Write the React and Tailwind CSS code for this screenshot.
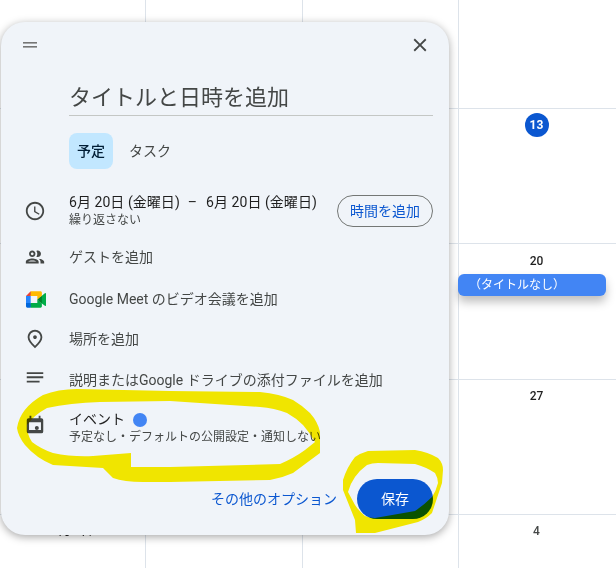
const font = { fontFamily: '"Roboto", "Noto Sans CJK JP", sans-serif' };

const cells = [
  '', '', '', '',
  '', '', '', '13',
  '', '', '', '20',
  '', '', '', '27',
  '7月 1日', '', '', '4',
];

const Icon = ({ d, size = 22, className = '' }) => (
  <svg viewBox="0 0 24 24" width={size} height={size} className={`fill-[#444746] shrink-0 ${className}`}>
    <path fillRule="evenodd" d={d} />
  </svg>
);

const MeetIcon = () => (
  <svg viewBox="0 0 87.5 72" width="20" height="17" className="shrink-0">
    <path fill="#00832d" d="M49.5 36l8.53 9.75 11.47 7.33 2-17.02-2-16.64-11.69 6.44z" />
    <path fill="#0066da" d="M0 51.5V66c0 3.315 2.685 6 6 6h14.5l3-10.96-3-9.54-9.95-3z" />
    <path fill="#e94235" d="M20.5 0L0 20.5l10.55 3 9.95-3 2.95-9.41z" />
    <path fill="#2684fc" d="M20.5 20.5H0v31h20.5z" />
    <path fill="#00ac47" d="M82.6 8.68L69.5 19.42v33.66l13.16 10.79c1.97 1.54 4.85.135 4.85-2.37V11c0-2.535-2.945-3.925-4.91-2.32zM49.5 36v15.5h-29V72h43c3.315 0 6-2.685 6-6V53.08z" />
    <path fill="#ffba00" d="M63.5 0h-43v20.5h29V36l20-16.57V6c0-3.315-2.685-6-6-6z" />
  </svg>
);

const Row = ({ className, icon, children }) => (
  <div className={`flex items-center pl-[23px] pr-4 ${className}`}>
    <div className="w-[45px] shrink-0 flex items-center">{icon}</div>
    {children}
  </div>
);

const paths = {
  close: 'M19 6.41 17.59 5 12 10.59 6.41 5 5 6.41 10.59 12 5 17.59 6.41 19 12 13.41 17.59 19 19 17.59 13.41 12z',
  clock: 'M11.99 2C6.47 2 2 6.48 2 12s4.47 10 9.99 10C17.52 22 22 17.52 22 12S17.52 2 11.99 2zM12 20c-4.42 0-8-3.58-8-8s3.58-8 8-8 8 3.58 8 8-3.58 8-8 8zm.5-13H11v6l5.25 3.15.75-1.23-4.5-2.67z',
  people: 'M9 13.75c-2.34 0-7 1.17-7 3.5V19h14v-1.75c0-2.33-4.66-3.5-7-3.5zM4.34 17c.84-.58 2.87-1.25 4.66-1.25s3.82.67 4.66 1.25H4.34zM9 12c1.93 0 3.5-1.57 3.5-3.5S10.93 5 9 5 5.5 6.57 5.5 8.5 7.07 12 9 12zm0-5c.83 0 1.5.67 1.5 1.5S9.83 10 9 10s-1.5-.67-1.5-1.5S8.17 7 9 7zm7.04 6.81c1.16.84 1.96 1.96 1.96 3.44V19h4v-1.75c0-2.02-3.5-3.17-5.96-3.44zM15 12c1.93 0 3.5-1.57 3.5-3.5S16.93 5 15 5c-.54 0-1.04.13-1.5.35.63.89 1 1.98 1 3.15s-.37 2.26-1 3.15c.46.22.96.35 1.5.35z',
  place: 'M12 12c-1.1 0-2-.9-2-2s.9-2 2-2 2 .9 2 2-.9 2-2 2zm6-1.8C18 6.57 15.35 4 12 4s-6 2.57-6 6.2c0 2.34 1.95 5.44 6 9.14 4.05-3.7 6-6.8 6-9.14zM12 2c4.2 0 8 3.22 8 8.2 0 3.32-2.67 7.25-8 11.8-5.33-4.55-8-8.48-8-11.8C4 5.22 7.8 2 12 2z',
  notes: 'M3 3.5h18v2H3zM3 8h18v2H3zM3 12.8h14v2H3z',
  event: 'M5 4.5h1V2h2v2.5h8V2h2v2.5h1a2 2 0 0 1 2 2V19a2 2 0 0 1-2 2H5a2 2 0 0 1-2-2V6.5a2 2 0 0 1 2-2zM5.5 9v8.5h13V9zM14 13a2.2 2.2 0 1 1 0 4.4 2.2 2.2 0 0 1 0-4.4z',
};

const App = () => {
  return (
    <div className="relative w-[616px] h-[568px] overflow-hidden bg-white" style={font}>
      {/* calendar behind the dialog */}
      <div className="grid grid-cols-[146px_157px_156px_157px] grid-rows-[109px_135px_136px_135px_53px] w-[616px] h-[568px]">
        {cells.map((c, i) => (
          <div
            key={i}
            className={`flex flex-col items-center border-[#dde3ea] ${i % 4 === 3 ? 'border-r-0 pr-[2px]' : 'border-r'} ${i < 16 ? 'border-b' : ''} ${i >= 15 ? 'pt-[7px]' : 'pt-2'}`}
          >
            {c === '13' ? (
              <div className="w-6 h-6 -mt-[4px] rounded-full bg-[#0b57d0] text-white text-xs font-bold flex items-center justify-center">13</div>
            ) : (
              <div className={`text-xs leading-[18px] font-medium ${c === '4' ? 'text-[#444746]' : 'text-[#1f1f1f]'}`}>{c}</div>
            )}
          </div>
        ))}
      </div>

      {/* the new event chip */}
      <div className="absolute left-[458px] top-[274px] w-[148px] h-[22px] rounded-md bg-[#4285f4] text-white text-xs leading-[22px] pl-[11px] shadow-[0_6px_10px_rgba(0,0,0,0.25)]">
        （タイトルなし）
      </div>

      {/* dialog */}
      <div className="absolute left-[1px] top-[22px] w-[448px] h-[513px] rounded-[24px] bg-[#f0f4f9] shadow-[0_2px_8px_rgba(0,0,0,0.35)] flex flex-col">
        <div className="flex items-center justify-between h-[46px] pl-[21px] pr-[18px] shrink-0">
          <svg viewBox="0 0 16 8" width="16" height="8" className="fill-[#757575]">
            <rect x="1" y="1" width="14" height="1.6" />
            <rect x="1" y="5" width="14" height="1.6" />
          </svg>
          <Icon d={paths.close} size={22} />
        </div>

        <div className="ml-[68px] mr-[16px] mt-[10px] h-[38px] border-b border-[#c4c7c5] text-[22px] leading-[40px] text-[#444746] shrink-0">
          タイトルと日時を追加
        </div>

        <div className="ml-[68px] mt-[17px] flex items-center gap-4 h-9 shrink-0 text-sm">
          <div className="w-11 h-9 rounded-lg bg-[#c2e7ff] text-[#001d35] font-medium flex items-center justify-center">予定</div>
          <div className="text-[#444746]">タスク</div>
        </div>

        <Row className="mt-[26px] h-8 shrink-0" icon={<Icon d={paths.clock} />}>
          <div className="flex-1">
            <div className="text-sm leading-[17px] text-[#1f1f1f] whitespace-pre tracking-[0.05px]">
              6月 20日 (金曜日)<span className="ml-[8px] mr-[9px]">–</span>6月 20日 (金曜日)
            </div>
            <div className="mt-[1px] text-xs leading-[16px] text-[#444746]">繰り返さない</div>
          </div>
          <button className="w-24 h-8 rounded-full border border-[#747775] text-sm text-[#0b57d0] flex items-center justify-center">時間を追加</button>
        </Row>

        <Row className="mt-[15px] h-[30px] shrink-0 text-sm text-[#444746]" icon={<Icon d={paths.people} />}>ゲストを追加</Row>
        <Row className="mt-[12px] h-[30px] shrink-0 text-sm text-[#444746]" icon={<span className="pl-[2px] flex"><MeetIcon /></span>}>Google Meet のビデオ会議を追加</Row>
        <Row className="mt-[10px] h-[30px] shrink-0 text-sm text-[#444746]" icon={<Icon d={paths.place} />}>場所を追加</Row>
        <Row className="mt-[11px] h-[30px] shrink-0 text-sm text-[#444746]" icon={<Icon d={paths.notes} />}>説明またはGoogle ドライブの添付ファイルを追加</Row>

        <Row className="mt-[15px] h-9 shrink-0" icon={<Icon d={paths.event} className="-translate-y-[3px]" />}>
          <div>
            <div className="flex items-center gap-2 text-sm leading-[19px] text-[#1f1f1f]">
              イベント
              <span className="w-3.5 h-3.5 rounded-full bg-[#4285f4]" />
            </div>
            <div className="text-xs leading-[17px] text-[#444746]">予定なし・デフォルトの公開設定・通知しない</div>
          </div>
        </Row>

        <div className="mt-[33px] h-10 pr-4 flex items-center justify-end gap-5 shrink-0">
          <div className="text-sm text-[#0b57d0]">その他のオプション</div>
          <button className="w-[76px] h-10 rounded-full bg-[#0b57d0] text-white text-sm flex items-center justify-center">保存</button>
        </div>
      </div>

      {/* yellow marker scribbles */}
      <svg viewBox="0 0 616 568" width="616" height="568" className="absolute left-0 top-0 mix-blend-multiply pointer-events-none">
        <path
          fill="#fff000"
          fillRule="evenodd"
          d="M43 395 Q58 389 77 389 L170 391 L260 392 Q280 394 293 400 Q303 406 310 413 Q318 422 320 432 L320 453 L293 473 Q282 478 270 480 L170 482 L143 482 Q124 482 113 478 L103 468 L53 465 Q36 458 25 445 Q18 436 17 428 Q20 408 43 395 Z
             M131 453 L131 467 L170 467 L280 464 Q294 458 305 450 L315 442 Q310 433 303 425 Q296 418 287 413 Q274 408 260 407 L170 401 L100 402 Q70 403 47 408 Q34 415 27 425 Q27 435 32 442 Q41 449 53 453 Q72 457 93 456 Z"
        />
        <path
          fill="#fff000"
          fillRule="evenodd"
          d="M343 480 Q347 467 355 457 Q361 453 368 451 L415 450 Q428 452 438 458 Q443 463 443 470 L442 483 L432 513 Q426 519 418 522 L375 533 L356 533 L355 520 L343 490 Z
             M348 492 Q350 484 355 477 Q360 470 367 465 Q372 463 378 463 L415 464 Q426 467 435 473 Q438 478 438 483 Q436 491 432 497 Q424 505 415 511 L375 518 Q369 518 365 516 Q359 511 355 505 Z"
        />
      </svg>
    </div>
  );
};

export default App;
